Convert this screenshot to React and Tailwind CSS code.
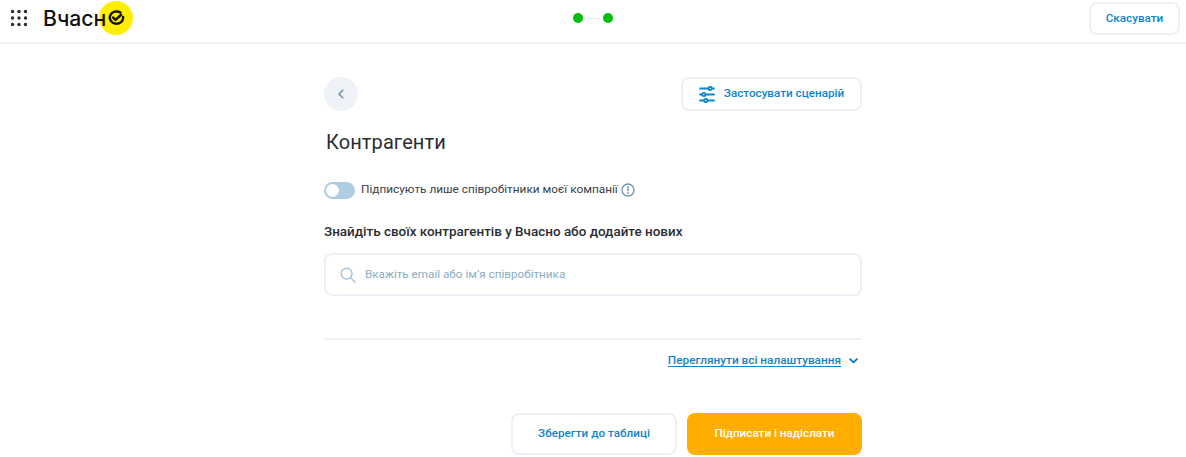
import React from "react";

function Dots() {
  const c = [0, 6.5, 13];
  return (
    <svg width="16" height="16" viewBox="0 0 16 16" className="shrink-0">
      {c.map((y) => c.map((x) => <circle key={`${x}-${y}`} cx={x + 1.5} cy={y + 1.5} r="1.7" fill="#2b2f33" />))}
    </svg>
  );
}

function Sliders() {
  return (
    <svg width="16" height="17" viewBox="0 0 16 17" fill="none" stroke="#0b86d0" strokeWidth="1.8" strokeLinecap="round">
      <path d="M1 2.5h8.5M13 2.5h2M1 8.5h2M6.5 8.5H15M1 14.5h4M8.5 14.5H15" />
      <circle cx="11.2" cy="2.5" r="1.7" />
      <circle cx="4.8" cy="8.5" r="1.7" />
      <circle cx="6.8" cy="14.5" r="1.7" />
    </svg>
  );
}

export default function App() {
  return (
    <div className="w-[1186px] h-[457px] overflow-hidden bg-white font-['Roboto',sans-serif]">
      <header className="h-[44px] border-b-2 border-[#edf1f5] flex items-center justify-between pl-[11px] pr-[6px]">
        <div className="flex items-center w-[280px] -mt-[6px]">
          <Dots />
          <div className="ml-[16px] flex items-center">
            <span className="relative z-10 font-['Inter',sans-serif] font-medium text-[21.2px] leading-[34px] text-[#111]">Вчасн</span>
            <span className="-ml-[7px] w-[34px] h-[34px] rounded-full bg-[#ffee00] flex items-center justify-center">
              <svg width="18" height="16" viewBox="0 0 17 15" fill="none" stroke="#15130a" strokeWidth="2.3" strokeLinecap="round">
                <path d="M12.6 2.4A6.3 5.8 0 1 0 15.2 6.6" />
                <path d="M5.6 7l2.4 2.2L13.4 4.4" />
              </svg>
            </span>
          </div>
        </div>
        <div className="flex items-center -mt-[6px] -ml-[5px]">
          <span className="w-[10px] h-[10px] rounded-full bg-[#00bf0a]" />
          <span className="w-[14px] h-[1px] mx-[3px] bg-[#e3ebf2]" />
          <span className="w-[10px] h-[10px] rounded-full bg-[#00bf0a]" />
        </div>
        <div className="w-[280px] flex justify-end -mt-[5px]">
          <button className="w-[91px] h-[33px] rounded-[8px] border-2 border-[#ebf1f6] text-[11.7px] font-medium text-[#0b86d0]">Скасувати</button>
        </div>
      </header>

      <main className="w-[538px] ml-[324px]">
        <div className="flex items-center justify-between pt-[33px]">
          <button className="w-[34px] h-[34px] rounded-full bg-[#eff3f7] flex items-center justify-center">
            <svg width="8" height="10" viewBox="0 0 8 10" fill="none" stroke="#6f93ad" strokeWidth="1.6" strokeLinecap="round" strokeLinejoin="round">
              <path d="M5.8 1.2L2 5l3.8 3.8" />
            </svg>
          </button>
          <button className="w-[181px] h-[34px] rounded-[8px] border-2 border-[#ebf1f6] flex items-center justify-center gap-[9px] text-[11.7px] font-medium text-[#0b86d0]">
            <Sliders />
            <span>Застосувати сценарій</span>
          </button>
        </div>

        <h1 className="mt-[17px] ml-[2px] text-[20px] leading-[28px] font-normal tracking-[0.1px] text-[#2a2e33]">Контрагенти</h1>

        <div className="mt-[24px] flex items-center h-[20px]">
          <span className="w-[31px] h-[17px] rounded-full bg-[#aecce2] p-[2px] flex">
            <span className="w-[13px] h-[13px] rounded-full bg-white" />
          </span>
          <span className="ml-[6px] text-[11.8px] text-[#3a4046]">Підписують лише співробітники моєї компанії</span>
          <svg width="14" height="14" viewBox="0 0 14 14" fill="none" className="ml-[3px]">
            <circle cx="7" cy="7" r="6" stroke="#6f93ad" strokeWidth="1.3" />
            <path d="M7 3.6v4.2" stroke="#6f93ad" strokeWidth="1.4" strokeLinecap="round" />
            <circle cx="7" cy="10" r="0.9" fill="#6f93ad" />
          </svg>
        </div>

        <div className="mt-[22px] text-[13.45px] leading-[20px] font-medium text-[#2a2e33]">Знайдіть своїх контрагентів у Вчасно або додайте нових</div>

        <div className="mt-[11px] h-[43px] rounded-[8px] border-2 border-[#ebf1f6] flex items-center pl-[14px]">
          <svg width="16" height="16" viewBox="0 0 16 16" fill="none" stroke="#a5c4d9" strokeWidth="1.5" strokeLinecap="round">
            <circle cx="6.6" cy="6.6" r="5.4" />
            <path d="M10.7 10.7L15 15" />
          </svg>
          <span className="ml-[9px] text-[11.7px] text-[#8cacc1]">Вкажіть email або ім’я співробітника</span>
        </div>

        <div className="mt-[42px] h-[2px] bg-[#edf1f5]" />

        <div className="mt-[11px] h-[20px] flex items-center justify-end">
          <a className="text-[11.8px] font-medium text-[#0b86d0] underline underline-offset-2">Переглянути всі налаштування</a>
          <svg width="9" height="6" viewBox="0 0 10 7" fill="none" stroke="#0b74b8" strokeWidth="2" strokeLinecap="round" strokeLinejoin="round" className="ml-[8px] mr-[4px]">
            <path d="M1 1.2L5 5l4-3.8" />
          </svg>
        </div>

        <div className="mt-[42px] flex justify-end gap-[10px]">
          <button className="w-[166px] h-[42px] rounded-[8px] border-2 border-[#ebf1f6] text-[11.7px] font-medium text-[#0b86d0]">Зберегти до таблиці</button>
          <button className="w-[175px] h-[42px] rounded-[8px] bg-[#ffae00] text-[11.7px] font-medium text-white">Підписати і надіслати</button>
        </div>
      </main>
    </div>
  );
}
